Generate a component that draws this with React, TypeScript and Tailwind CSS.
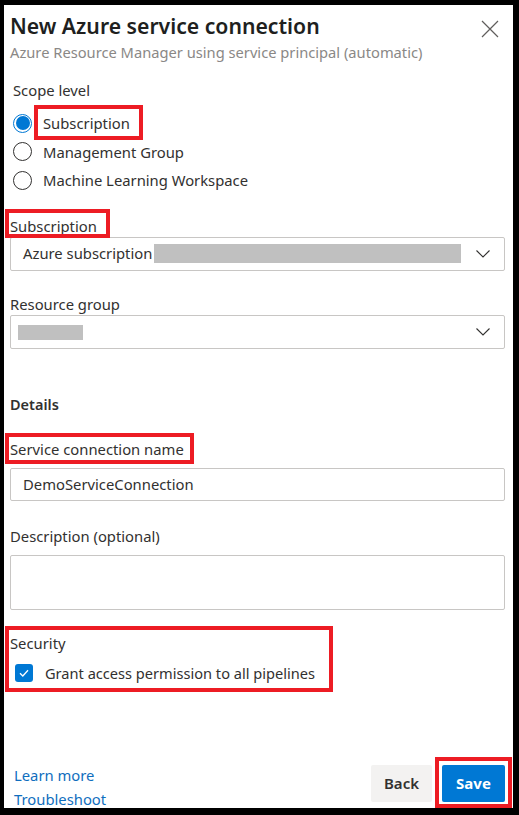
import React from "react";

function Chevron() {
  return (
    <svg width="16" height="16" viewBox="0 0 16 16" fill="none">
      <path d="M1.5 4.5 L8 11 L14.5 4.5" stroke="#323130" strokeWidth="1.1" />
    </svg>
  );
}

function RedBox({ className }: { className: string }) {
  return <span className={"pointer-events-none absolute border-[4px] border-[#ed1c24] " + className} />;
}

function Radio({ checked, label, box }: { checked?: boolean; label: string; box?: boolean }) {
  return (
    <div className="flex items-center h-[28.5px]">
      {checked ? (
        <span className="w-[19px] h-[19px] rounded-full border border-[#0078d4] flex items-center justify-center">
          <span className="w-[14px] h-[14px] rounded-full bg-[#0078d4]" />
        </span>
      ) : (
        <span className="w-[19px] h-[19px] rounded-full border border-[#323130]" />
      )}
      <span className="relative ml-[11px] text-[14.8px] leading-[20px] text-[#323130]">
        {label}
        {box && <RedBox className="left-[-9px] right-[-13px] top-[-8px] bottom-[-7px]" />}
      </span>
    </div>
  );
}

export default function App() {
  return (
    <div className="w-[519px] h-[815px] bg-black pl-[4px] pt-[5px] pr-[6px] pb-[7px] font-['Noto_Sans',sans-serif]">
      <div className="bg-white h-full flex flex-col">
        <div className="flex justify-between pl-[6px] pr-[14px] pt-[7px]">
          <div>
            <div className="text-[21.2px] leading-[28px] font-semibold text-[#201f1e]">New Azure service connection</div>
            <div className="text-[14.7px] leading-[20px] text-[#8a8886] mt-[2px]">
              Azure Resource Manager using service principal (automatic)
            </div>
          </div>
          <svg width="18" height="18" viewBox="0 0 18 18" className="mt-[8px]">
            <path d="M1 1 L17 17 M17 1 L1 17" stroke="#605e5c" strokeWidth="1.2" />
          </svg>
        </div>

        <div className="pl-[9px] mt-[18px]">
          <div className="text-[14.8px] leading-[20px] text-[#323130]">Scope level</div>
          <div className="mt-[9px] flex flex-col">
            <Radio checked label="Subscription" box />
            <Radio label="Management Group" />
            <Radio label="Machine Learning Workspace" />
          </div>
        </div>

        <div className="pl-[6px] pr-[8px] mt-[21px] flex flex-col">
          <div className="relative w-fit text-[14.8px] leading-[20px] text-[#323130]">
            Subscription
            <RedBox className="left-[-5px] right-[-13px] top-[-7px] bottom-[-2px]" />
          </div>
          <div className="mt-[1px] h-[34px] border border-[#c8c6c4] rounded-[2px] flex items-center pl-[12px] pr-[13px]">
            <span className="text-[14.8px] text-[#323130]">Azure subscription</span>
            <span className="ml-[2px] w-[307px] h-[19px] bg-[#c0c0c0]" />
            <span className="flex-1" />
            <Chevron />
          </div>

          <div className="mt-[23px] text-[14.8px] leading-[20px] text-[#323130]">Resource group</div>
          <div className="mt-[1px] h-[34px] border border-[#c8c6c4] rounded-[2px] flex items-center pl-[7px] pr-[13px]">
            <span className="w-[65px] h-[15px] bg-[#c0c0c0] mt-[2px]" />
            <span className="flex-1" />
            <Chevron />
          </div>

          <div className="mt-[45px] text-[14.5px] leading-[20px] font-semibold text-[#323130]">Details</div>

          <div className="mt-[25px] relative w-fit text-[14.8px] leading-[20px] text-[#323130]">
            Service connection name
            <RedBox className="left-[-5px] right-[-10px] top-[-6px] bottom-[-5px]" />
          </div>
          <div className="mt-[9px] h-[33px] border border-[#c8c6c4] rounded-[2px] flex items-center pl-[12px]">
            <span className="text-[14.8px] text-[#323130]">DemoServiceConnection</span>
          </div>

          <div className="mt-[25px] text-[14.8px] leading-[20px] text-[#323130]">Description (optional)</div>
          <div className="mt-[9px] h-[55px] border border-[#c8c6c4] rounded-[2px]" />

          <div className="relative mt-[23px] w-[312px]">
            <RedBox className="left-[-5px] right-[-11px] top-[-7px] bottom-[-9px]" />
            <div className="text-[14.8px] leading-[20px] text-[#323130]">Security</div>
            <div className="flex items-center mt-[10px] pl-[5px]">
              <span className="w-[18px] h-[18px] rounded-[3px] bg-[#0078d4] flex items-center justify-center">
                <svg width="12" height="12" viewBox="0 0 12 12">
                  <path d="M2 6.3 L4.8 9 L10 3.3" stroke="white" strokeWidth="1.3" fill="none" />
                </svg>
              </span>
              <span className="ml-[12px] text-[14.6px] leading-[20px] text-[#323130]">Grant access permission to all pipelines</span>
            </div>
          </div>
        </div>

        <div className="flex-1" />

        <div className="flex items-end justify-between pl-[10px] pr-[8px]">
          <div className="flex flex-col text-[14.8px] leading-[24px] text-[#106ebe] mb-[-3px]">
            <span>Learn more</span>
            <span>Troubleshoot</span>
          </div>
          <div className="flex items-center gap-[10px] mb-[6px]">
            <button className="h-[37px] w-[61px] bg-[#f3f2f1] rounded-[2px] text-[15px] font-semibold text-[#323130]">Back</button>
            <div className="relative">
              <RedBox className="left-[-7px] right-[-7px] top-[-8px] bottom-[-6px]" />
              <button className="h-[37px] w-[63px] bg-[#0078d4] rounded-[2px] text-[15px] font-bold text-white">Save</button>
            </div>
          </div>
        </div>
      </div>
    </div>
  );
}
